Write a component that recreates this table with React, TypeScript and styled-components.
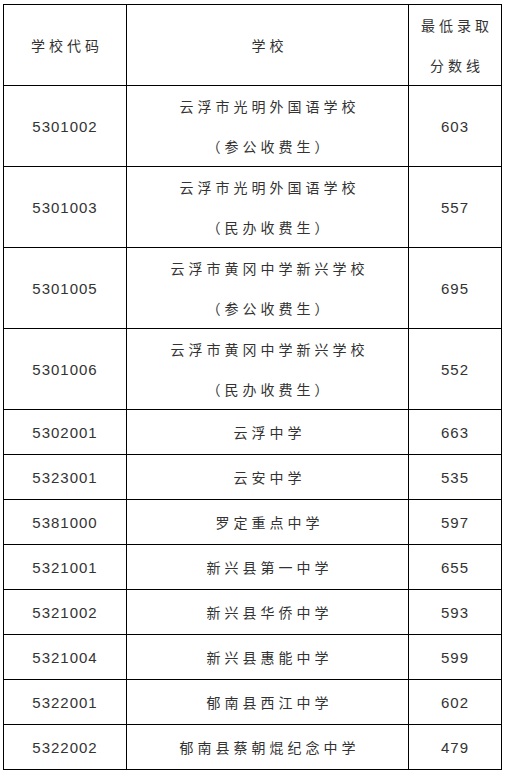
import { createGlobalStyle, styled } from 'styled-components';

const GlobalStyle = createGlobalStyle`
  html, body {
    margin: 0;
    padding: 0;
    background: #fff;
  }
`;

type Row = {
  code: string;
  name: string;
  note?: string;
  score: string;
};

const rows: Row[] = [
  { code: '5301002', name: '云浮市光明外国语学校', note: '（参公收费生）', score: '603' },
  { code: '5301003', name: '云浮市光明外国语学校', note: '（民办收费生）', score: '557' },
  { code: '5301005', name: '云浮市黄冈中学新兴学校', note: '（参公收费生）', score: '695' },
  { code: '5301006', name: '云浮市黄冈中学新兴学校', note: '（民办收费生）', score: '552' },
  { code: '5302001', name: '云浮中学', score: '663' },
  { code: '5323001', name: '云安中学', score: '535' },
  { code: '5381000', name: '罗定重点中学', score: '597' },
  { code: '5321001', name: '新兴县第一中学', score: '655' },
  { code: '5321002', name: '新兴县华侨中学', score: '593' },
  { code: '5321004', name: '新兴县惠能中学', score: '599' },
  { code: '5322001', name: '郁南县西江中学', score: '602' },
  { code: '5322002', name: '郁南县蔡朝焜纪念中学', score: '479' },
];

export default function App() {
  return (
    <>
      <GlobalStyle />
      <Page>
        <Table>
          <colgroup>
            <col style={{ width: 123 }} />
            <col style={{ width: 282 }} />
            <col style={{ width: 93 }} />
          </colgroup>
          <thead>
            <tr>
              <TextCell $tall>学校代码</TextCell>
              <TextCell $tall>学校</TextCell>
              <TextCell $tall>
                最低录取
                <br />
                分数线
              </TextCell>
            </tr>
          </thead>
          <tbody>
            {rows.map((row) => (
              <tr key={row.code}>
                <NumCell $tall={!!row.note}>{row.code}</NumCell>
                <TextCell $tall={!!row.note}>
                  {row.name}
                  {row.note && (
                    <>
                      <br />
                      {row.note}
                    </>
                  )}
                </TextCell>
                <NumCell $tall={!!row.note}>{row.score}</NumCell>
              </tr>
            ))}
          </tbody>
        </Table>
      </Page>
    </>
  );
}

const Page = styled.div`
  padding: 4px 0 0 3px;
`;

const Table = styled.table`
  border-collapse: collapse;
  table-layout: fixed;
  width: 499px;
  color: #333;
`;

const Cell = styled.td<{ $tall?: boolean }>`
  border: 1px solid #000;
  padding: 0;
  height: ${(p) => (p.$tall ? 81 : 45)}px;
  box-sizing: border-box;
  text-align: center;
  vertical-align: middle;
`;

const TextCell = styled(Cell)`
  font-family: 'Noto Sans CJK SC', sans-serif;
  font-size: 14px;
  font-weight: 400;
  letter-spacing: 4px;
  line-height: 40px;
  padding-left: 4px;
`;

const NumCell = styled(Cell)`
  font-family: 'Liberation Sans', sans-serif;
  font-size: 15px;
  letter-spacing: 1px;
`;
